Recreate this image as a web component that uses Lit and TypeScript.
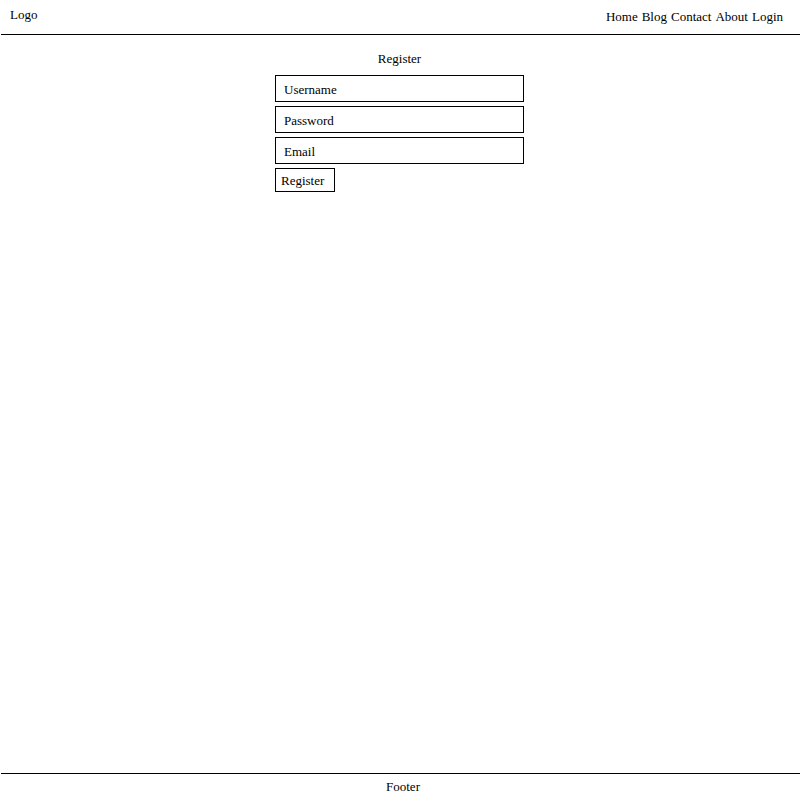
import { LitElement, html, css } from "lit";
import { customElement } from "lit/decorators.js";

@customElement("app-root")
export class AppRoot extends LitElement {
  static styles = css`
    :host {
      display: flex;
      flex-direction: column;
      min-height: 100vh;
      box-sizing: border-box;
      padding-left: 1px;
      background: #fff;
      color: #000;
      font: 13px/16px "Liberation Serif", "Times New Roman", serif;
    }
    .bar {
      display: flex;
      justify-content: space-between;
      padding: 7px 17px 9px 9px;
      border-bottom: 1px solid #000;
    }
    .bar a {
      color: inherit;
      text-decoration: none;
    }
    .links {
      display: flex;
      gap: 4px;
      padding-top: 2px;
    }
    .main {
      flex: 1;
      padding: 16px 18px 16px 16px;
    }
    .form {
      display: flex;
      flex-direction: column;
      align-items: flex-start;
      gap: 4px;
      width: 100%;
      max-width: 249px;
      margin: 0 auto;
    }
    .title {
      align-self: center;
      margin: 0 0 4px;
      font: inherit;
    }
    .field,
    .submit {
      box-sizing: border-box;
      margin: 0;
      border: 1px solid #000;
      border-radius: 0;
      background: #fff;
      color: inherit;
      font: inherit;
    }
    .field {
      width: 100%;
      height: 27px;
      padding: 2px 8px 0;
    }
    .field::placeholder {
      color: #000;
      opacity: 1;
    }
    .submit {
      width: 60px;
      height: 24px;
      padding: 2px 5px 0;
      text-align: left;
    }
    .footer {
      padding: 5px 0 5px 5px;
      border-top: 1px solid #000;
      text-align: center;
    }
  `;

  private fields = [
    { label: "Username", type: "text" },
    { label: "Password", type: "password" },
    { label: "Email", type: "email" },
  ];

  render() {
    return html`
      <header class="bar">
        <a href="#home">Logo</a>
        <nav class="links">
          ${["Home", "Blog", "Contact", "About", "Login"].map(
            (name) => html`<a href="#${name.toLowerCase()}">${name}</a>`
          )}
        </nav>
      </header>
      <main class="main">
        <form class="form" @submit=${(e: Event) => e.preventDefault()}>
          <h1 class="title">Register</h1>
          ${this.fields.map(
            (f) => html`<input
              class="field"
              type=${f.type}
              name=${f.label.toLowerCase()}
              placeholder=${f.label}
              aria-label=${f.label}
            />`
          )}
          <button class="submit" type="submit">Register</button>
        </form>
      </main>
      <footer class="footer">Footer</footer>
    `;
  }
}
